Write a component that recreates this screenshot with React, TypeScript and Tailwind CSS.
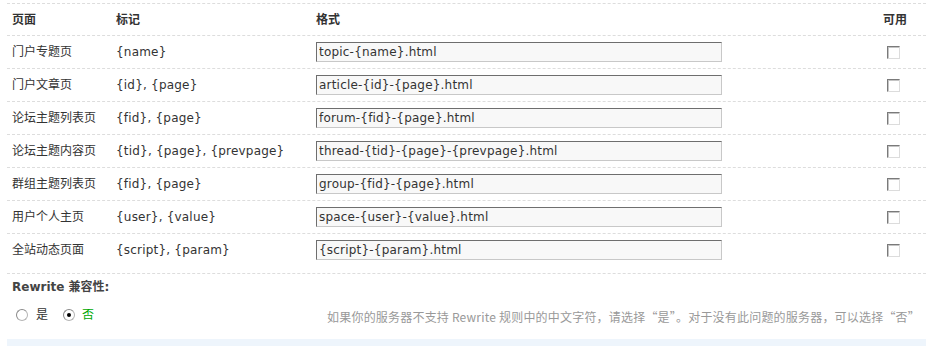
import React from "react";

type Rule = { page: string; marks: string; format: string };

const rules: Rule[] = [
  { page: "门户专题页", marks: "{name}", format: "topic-{name}.html" },
  { page: "门户文章页", marks: "{id}, {page}", format: "article-{id}-{page}.html" },
  { page: "论坛主题列表页", marks: "{fid}, {page}", format: "forum-{fid}-{page}.html" },
  { page: "论坛主题内容页", marks: "{tid}, {page}, {prevpage}", format: "thread-{tid}-{page}-{prevpage}.html" },
  { page: "群组主题列表页", marks: "{fid}, {page}", format: "group-{fid}-{page}.html" },
  { page: "用户个人主页", marks: "{user}, {value}", format: "space-{user}-{value}.html" },
  { page: "全站动态页面", marks: "{script}, {param}", format: "{script}-{param}.html" },
];

const font = "font-['DejaVu_Sans','Noto_Sans_CJK_SC',sans-serif]";

function Checkbox() {
  return (
    <span className="ml-[4px] block h-[13px] w-[13px] border border-t-[#7a7a7a] border-l-[#7a7a7a] border-b-[#dcdcdc] border-r-[#dcdcdc] bg-white shadow-[inset_1px_1px_0_#c4c4c4]" />
  );
}

function Radio({ checked }: { checked?: boolean }) {
  return (
    <span className="flex h-[12px] w-[12px] items-center justify-center rounded-full border border-[#b5b5b5] border-t-[#8a8a8a] border-l-[#8a8a8a] bg-white">
      {checked && <span className="block h-[4px] w-[4px] rounded-full bg-black" />}
    </span>
  );
}

export default function App() {
  return (
    <div className={`${font} w-[926px] h-[346px] overflow-hidden bg-white pl-[7px] pt-[3px] text-[12px] text-[#333]`}>
      {/* header */}
      <div className="flex h-[32px] items-center border-t border-dashed border-[#dddddd] font-bold">
        <div className="w-[109px] pl-[5px]">页面</div>
        <div className="w-[200px]">标记</div>
        <div className="w-[567px]">格式</div>
        <div>可用</div>
      </div>

      {rules.map((r, i) => (
        <div
          key={r.page}
          className={`flex items-start border-t border-dashed border-[#dddddd] ${i === rules.length - 1 ? "h-[40px]" : "h-[33px]"}`}
        >
          <div className="flex h-[32px] w-[109px] items-center pl-[5px]">{r.page}</div>
          <div className="flex h-[32px] w-[200px] items-center tracking-[0.2px]">{r.marks}</div>
          <div className="flex h-[32px] w-[567px] items-center">
            <input
              readOnly
              value={r.format}
              className={`${font} h-[20px] w-[406px] border border-t-[#6e6e6e] border-l-[#6e6e6e] border-b-[#c8c8c8] border-r-[#c8c8c8] bg-[#f8f8f8] pl-[2px] text-[12px] tracking-[0.2px] text-[#333] outline-none`}
            />
          </div>
          <div className="flex h-[32px] items-center">
            <Checkbox />
          </div>
        </div>
      ))}

      {/* rewrite compat */}
      <div className="flex h-[27px] items-center border-t border-dashed border-[#dddddd] pl-[5px] font-bold text-[#444]">
        Rewrite 兼容性:
      </div>
      <div className="flex h-[30px] items-center justify-between pr-[6px]">
        <div className="flex items-center pl-[9px]">
          <Radio />
          <span className="ml-[8px]">是</span>
          <span className="ml-[15px]">
            <Radio checked />
          </span>
          <span className="ml-[7px] text-[#00a800]">否</span>
        </div>
        <div className="pt-[4px] font-['Noto_Sans_CJK_SC','DejaVu_Sans',sans-serif] tracking-[0.2px] text-[#999]">
          如果你的服务器不支持 Rewrite 规则中的中文字符，请选择“是”。对于没有此问题的服务器，可以选择“否”
        </div>
      </div>
      <div className="mt-[9px] h-[8px] bg-[#eef5fc]" />
    </div>
  );
}
